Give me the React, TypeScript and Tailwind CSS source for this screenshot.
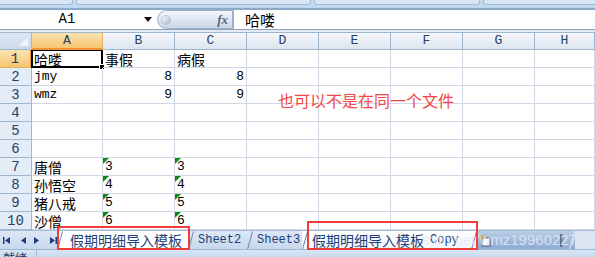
import React from "react";

const CN = "font-['Noto_Sans_CJK_SC',sans-serif]";
const MONO = "font-['Liberation_Mono','Noto_Sans_CJK_SC',monospace]";

const cols = ["A", "B", "C", "D", "E", "F", "G", "H"];
const widths = ["w-[71px]", "w-[72px]", "w-[72px]", "w-[72px]", "w-[72px]", "w-[72px]", "w-[72px]", "flex-1"];

type Cell = { v: string; right?: boolean; cn?: boolean; tri?: boolean };
const data: Record<number, Record<number, Cell>> = {
  1: { 0: { v: "哈喽", cn: true }, 1: { v: "事假", cn: true }, 2: { v: "病假", cn: true } },
  2: { 0: { v: "jmy" }, 1: { v: "8", right: true }, 2: { v: "8", right: true } },
  3: { 0: { v: "wmz" }, 1: { v: "9", right: true }, 2: { v: "9", right: true } },
  7: { 0: { v: "唐僧", cn: true }, 1: { v: "3", tri: true }, 2: { v: "3", tri: true } },
  8: { 0: { v: "孙悟空", cn: true }, 1: { v: "4", tri: true }, 2: { v: "4", tri: true } },
  9: { 0: { v: "猪八戒", cn: true }, 1: { v: "5", tri: true }, 2: { v: "5", tri: true } },
  10: { 0: { v: "沙僧", cn: true }, 1: { v: "6", tri: true }, 2: { v: "6", tri: true } },
};

function Tri({ dir }: { dir: "first" | "prev" | "next" | "last" }) {
  return (
    <svg width="9" height="9" viewBox="0 0 9 9" className="shrink-0">
      {dir === "first" && (
        <>
          <rect x="1" y="1" width="1.5" height="7" fill="#1b3f7a" />
          <path d="M8 1 L3 4.5 L8 8 Z" fill="#1b3f7a" />
        </>
      )}
      {dir === "prev" && <path d="M7 1 L2 4.5 L7 8 Z" fill="#1b3f7a" />}
      {dir === "next" && <path d="M2 1 L7 4.5 L2 8 Z" fill="#1b3f7a" />}
      {dir === "last" && (
        <>
          <path d="M1 1 L6 4.5 L1 8 Z" fill="#1b3f7a" />
          <rect x="6.5" y="1" width="1.5" height="7" fill="#1b3f7a" />
        </>
      )}
    </svg>
  );
}

function Slant({ color = "#8fa6c4" }: { color?: string }) {
  return (
    <svg width="6" height="19" viewBox="0 0 6 19" className="shrink-0">
      <path d="M0.5 18.5 L5.5 0.5" stroke={color} strokeWidth="1" fill="none" />
    </svg>
  );
}

export default function App() {
  const rows = Array.from({ length: 10 }, (_, i) => i + 1);
  return (
    <div className="relative w-[595px] h-[257px] overflow-hidden bg-white flex flex-col">
      {/* ribbon bottom */}
      <div className="flex flex-col h-[10px] shrink-0 bg-[#c6d9ef]">
        <div className="flex h-[5px] gap-[3px]">
          <div className="w-[73px] bg-[#d9e5f3] border-b border-r border-[#a2bad8] rounded-br-[3px]" />
          <div className="w-[235px] bg-[#d9e5f3] border-b border-x border-[#a2bad8] rounded-b-[3px]" />
          <div className="flex-1 bg-[#d9e5f3] border-b border-x border-[#a2bad8] rounded-b-[3px]" />
          <div className="w-[112px] bg-[#d9e5f3] border-b border-l border-[#a2bad8] rounded-bl-[3px]" />
        </div>
        <div className="h-[1px] bg-[#b4e2f4]" />
        <div className="h-[2px] bg-[#c3d6ee]" />
        <div className="h-[2px] bg-[#8ea8c8]" />
      </div>

      {/* formula bar */}
      <div className="flex items-center h-[19px] shrink-0 bg-white">
        <div className={`w-[134px] text-center text-[14px] leading-[19px] text-black ${MONO}`}>A1</div>
        <div className="w-[23px] flex justify-center pl-[4px]">
          <svg width="8" height="5" viewBox="0 0 8 5">
            <path d="M0 0 L8 0 L4 5 Z" fill="#111" />
          </svg>
        </div>
        <div className="relative w-[76px] h-[19px] flex items-center justify-end pr-[4px] rounded-l-[10px] border border-[#9bb0c9] bg-gradient-to-b from-[#f4f7fb] via-[#dfe7f2] to-[#c9d6e8]">
          <div className="absolute left-[3px] top-[4px] w-[10px] h-[10px] rounded-full bg-gradient-to-br from-[#ffffff] to-[#aeb9c8] border border-[#b9c4d2]" />
          <span className="font-['Liberation_Serif',serif] italic font-bold text-[13px] text-[#5b6778] leading-none">fx</span>
        </div>
        <div className="border-l border-[#9bb0c9] h-[19px]" />
        <div className={`pl-[11px] text-[15px] leading-[19px] text-black ${CN}`}>哈喽</div>
      </div>
      <div className="h-[1px] bg-[#8da3bd] shrink-0" />
      <div className="h-[2px] bg-[#e3eaf4] shrink-0" />

      {/* column header */}
      <div className="flex h-[18px] shrink-0 border-t border-[#9eb6ce]">
        <div className="relative w-[32px] bg-gradient-to-b from-[#dde7f3] to-[#cbd9ea] border-r border-b border-[#9eb6ce]">
          <svg className="absolute right-[3px] bottom-[3px]" width="9" height="9" viewBox="0 0 9 9">
            <path d="M9 0 L9 9 L0 9 Z" fill="#f1f4f8" />
          </svg>
        </div>
        {cols.map((c, i) => (
          <div
            key={c}
            className={`${widths[i]} flex items-center justify-center text-[13px] ${MONO} ${
              i === 0
                ? "bg-gradient-to-b from-[#fbe3b0] to-[#f4c56e] border-r border-b-2 border-r-[#e8b25b] border-b-[#f29436] text-[#27415f]"
                : "bg-gradient-to-b from-[#f5f7fb] to-[#dde5ef] border-r border-b border-[#9eb6ce] text-[#27415f]"
            }`}
          >
            {c}
          </div>
        ))}
      </div>

      {/* grid */}
      <div className="relative h-[180px] shrink-0 overflow-hidden">
        {rows.map((r) => (
          <div key={r} className="flex h-[18px]">
            <div
              className={`w-[32px] shrink-0 flex items-center justify-center pt-[2px] text-[14px] ${MONO} text-[#27415f] border-r border-b ${
                r === 1
                  ? "bg-gradient-to-b from-[#fbe3b0] to-[#f4c56e] border-b-[#e8b25b] border-r-[#f29436] border-r-2"
                  : "bg-[#e4ecf7] border-[#9eb6ce]"
              }`}
            >
              {r}
            </div>
            {cols.map((c, i) => {
              const cell = data[r]?.[i];
              return (
                <div
                  key={c}
                  className={`${widths[i]} relative flex items-end border-r border-b border-[#d0d7e5] ${
                    cell?.right ? "justify-end pr-[2px]" : "justify-start pl-[2px]"
                  }`}
                >
                  {r === 1 && i === 0 && (
                    <div className="absolute -left-[1px] -top-[1px] -right-[1px] -bottom-[1px] border-2 border-black">
                      <div className="absolute -right-[4px] -bottom-[4px] w-[6px] h-[6px] bg-black border border-white" />
                    </div>
                  )}
                  {cell?.tri && (
                    <svg className="absolute left-0 top-0" width="6" height="6" viewBox="0 0 6 6">
                      <path d="M0 0 L6 0 L0 6 Z" fill="#0e8a1f" />
                    </svg>
                  )}
                  {cell && (
                    <span
                      className={`${cell.cn ? `${CN} text-[14px]` : `${MONO} text-[13px]`} leading-[16px] text-black`}
                    >
                      {cell.v}
                    </span>
                  )}
                </div>
              );
            })}
          </div>
        ))}
        <div className={`absolute left-[278px] top-[40px] text-[16px] leading-[20px] text-[#f44848] ${CN}`}>
          也可以不是在同一个文件
        </div>
      </div>

      {/* tab bar */}
      <div className="flex h-[19px] shrink-0 bg-gradient-to-b from-[#dde8f5] to-[#c7d7ec] border-t border-[#a5bad6]">
        <div className="w-[57px] flex items-center pl-[2px] gap-[4px]">
          <Tri dir="first" />
          <span className="w-[4px]" />
          <Tri dir="prev" />
          <Tri dir="next" />
          <span className="w-[2px]" />
          <Tri dir="last" />
        </div>
        <div className="w-[131px] flex items-stretch bg-white">
          <Slant color="#6f86a6" />
          <span className={`pl-[7px] text-[14px] leading-[18px] text-[#1b3f7a] ${CN}`}>假期明细导入模板</span>
        </div>
        <div className="w-[59px] flex items-stretch">
          <Slant color="#6f86a6" />
          <span className={`pl-[4px] text-[12px] leading-[19px] text-[#1b3f7a] ${MONO}`}>Sheet2</span>
        </div>
        <div className="w-[55px] flex items-stretch">
          <Slant color="#6f86a6" />
          <span className={`pl-[4px] text-[12px] leading-[19px] text-[#1b3f7a] ${MONO}`}>Sheet3</span>
        </div>
        <div className="w-[175px] flex items-stretch bg-gradient-to-b from-[#ffffff] to-[#f0f4fa]">
          <Slant color="#6f86a6" />
          <span className={`pl-[4px] text-[14px] leading-[18px] text-[#1b3f7a] ${CN}`}>假期明细导入模板</span>
          <span className={`pl-[6px] text-[12px] leading-[19px] text-[#1b3f7a] ${MONO}`}>Copy</span>
          <span className="flex-1" />
          <Slant color="#6f86a6" />
        </div>
        <div className="flex-1 flex items-center bg-gradient-to-b from-[#b9cde6] to-[#8fabd3]">
          <svg width="14" height="14" viewBox="0 0 14 14" className="ml-[2px]">
            <rect x="3" y="5" width="8" height="8" fill="#ffffff" stroke="#4a5d78" strokeWidth="1" />
            <path d="M4 1 L5 3.5 L7.5 4 L5 5 L4 7.5 L3 5 L0.5 4 L3 3.5 Z" fill="#f4a52a" />
          </svg>
          <span className="flex-1" />
          <div className="w-[5px] h-[13px] bg-gradient-to-r from-[#4d5f7a] to-[#c3d0e2] mr-[4px]" />
          <Slant color="#e6edf6" />
          <div className="w-[20px] h-[19px] bg-[#dce6f2]" />
        </div>
      </div>

      {/* status bar */}
      <div className="flex h-[8px] shrink-0 bg-gradient-to-b from-[#d9e5f4] to-[#c9daf0] border-t border-[#9eb6ce] overflow-hidden">
        <div className="w-[37px] border-r border-[#a8bcd6] pl-[3px] pt-[1px]">
          <span className={`block text-[12px] leading-[14px] text-[#1e395b] ${CN}`}>就绪</span>
        </div>
      </div>

      {/* watermark */}
      <div className="absolute right-[18px] top-[231px] text-[15px] leading-[18px] text-[#e4ebf4] opacity-80 font-['Liberation_Sans',sans-serif] pointer-events-none whitespace-nowrap">
        s:dn.net/wmz19960227
      </div>

      {/* red annotation boxes */}
      <div className="absolute left-[57px] top-[226px] w-[133px] h-[24px] border-2 border-[#f23b3b] pointer-events-none" />
      <div className="absolute left-[307px] top-[221px] w-[171px] h-[29px] border-2 border-[#f23b3b] pointer-events-none" />
    </div>
  );
}
